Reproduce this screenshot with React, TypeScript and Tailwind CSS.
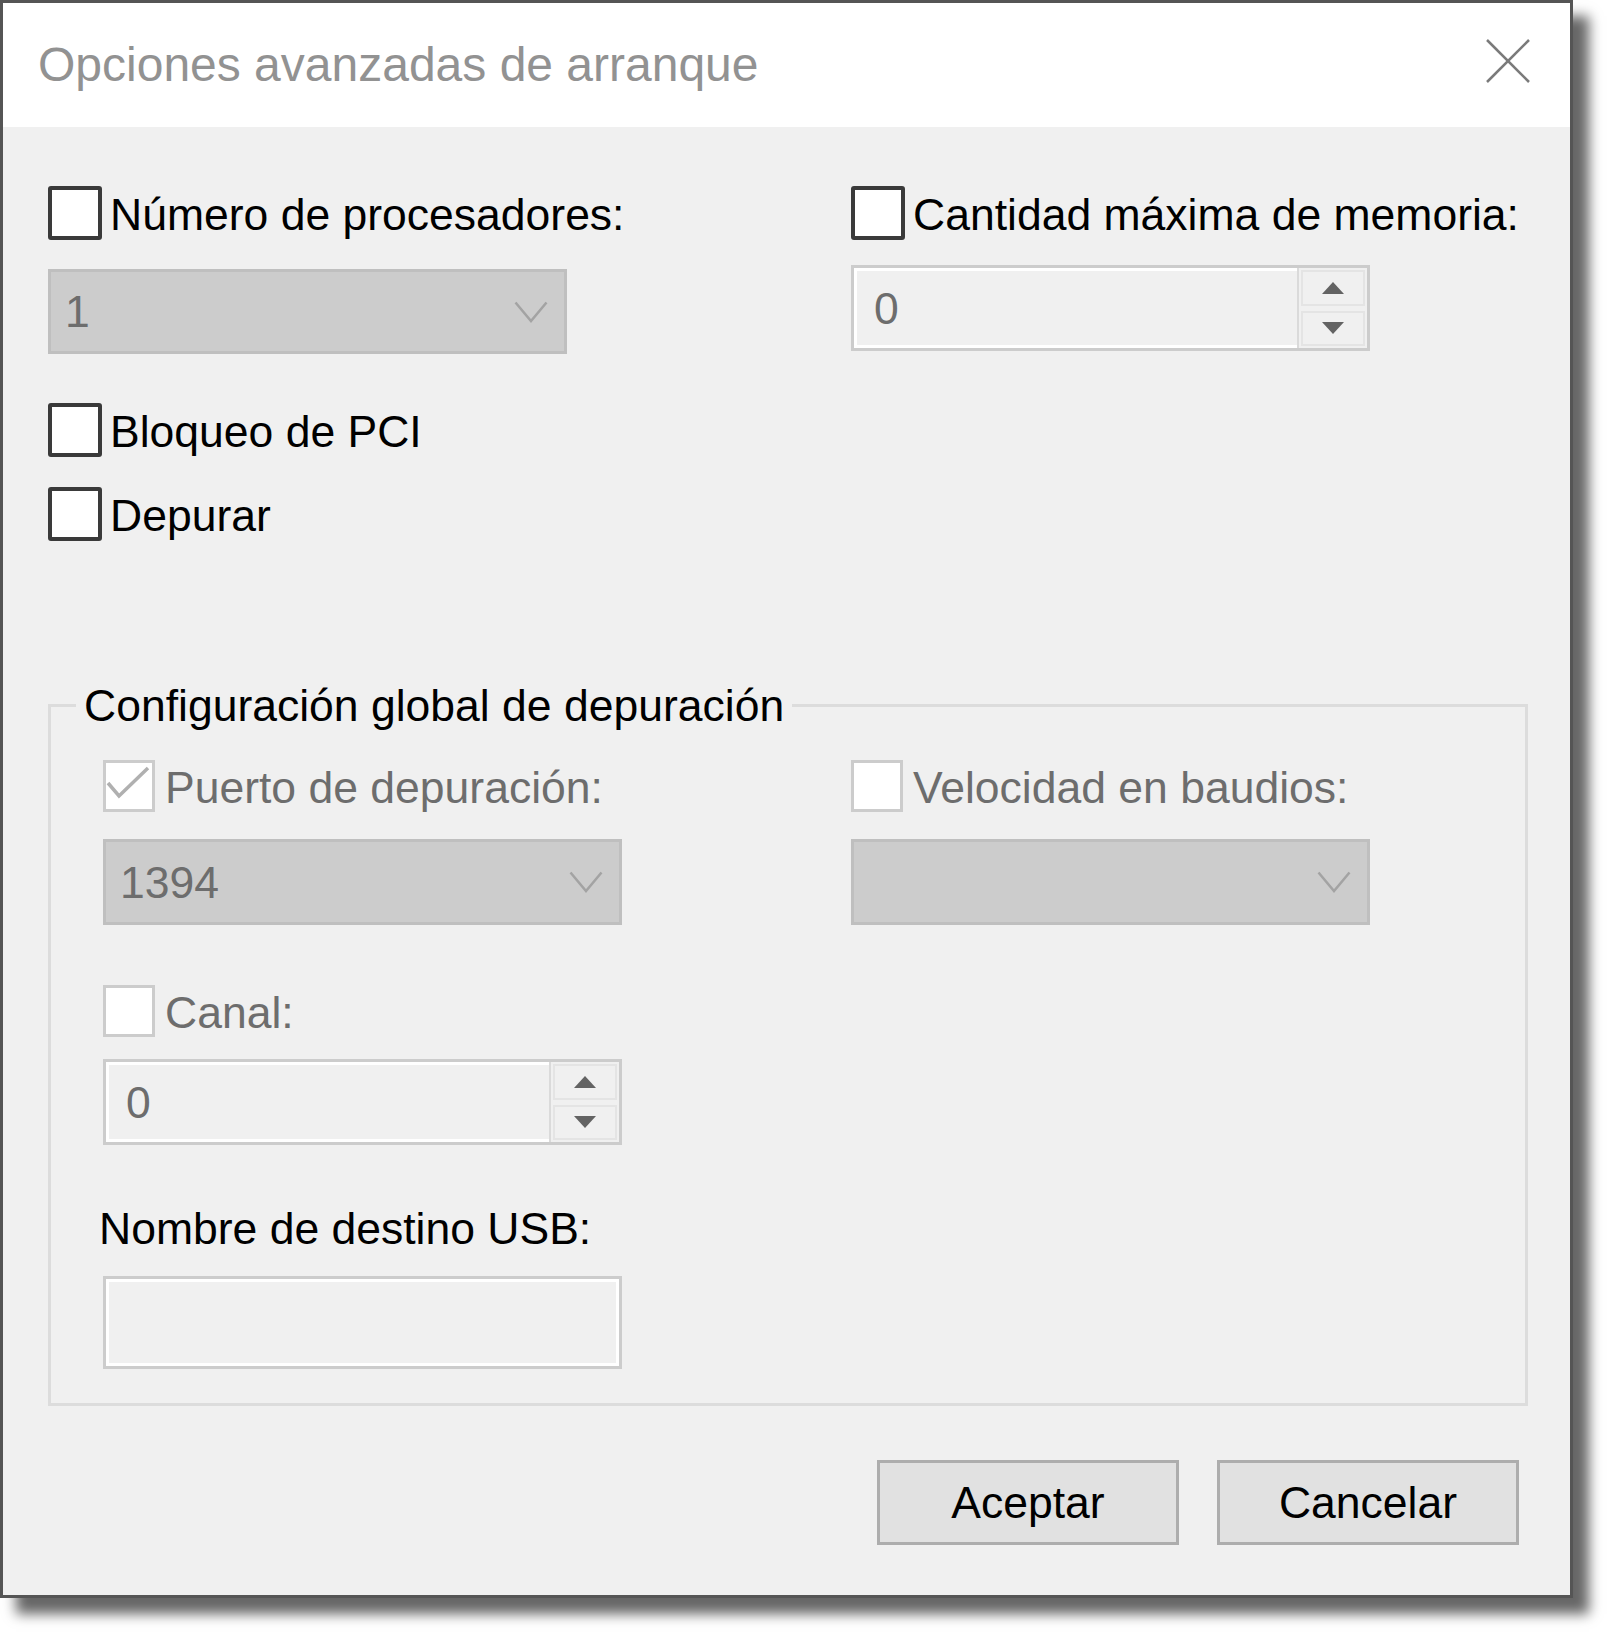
import React from "react";

function Box({ checked = false, disabled = false }: { checked?: boolean; disabled?: boolean }) {
  if (disabled) {
    return (
      <div className="flex h-[52px] w-[52px] shrink-0 items-center justify-center border-[3px] border-[#cccccc] bg-white">
        {checked && (
          <svg width="46" height="46" viewBox="0 0 46 46">
            <polyline points="2,20 13,33 42,5" fill="none" stroke="#b0b0b0" strokeWidth="3.5" />
          </svg>
        )}
      </div>
    );
  }
  return <div className="h-[54px] w-[54px] shrink-0 rounded-[3px] border-[4px] border-[#3a3a3a] bg-white" />;
}

function CheckRow({ label, disabled = false, checked = false }: { label: string; disabled?: boolean; checked?: boolean }) {
  return (
    <div className={disabled ? "flex h-[52px] items-center gap-[10px] text-[#6d6d6d]" : "flex h-[55px] items-center gap-[8px] text-black"}>
      <Box disabled={disabled} checked={checked} />
      <span className="whitespace-nowrap pt-[3px]">{label}</span>
    </div>
  );
}

function Chevron() {
  return (
    <svg width="34" height="22" viewBox="0 0 34 22">
      <polyline points="1.5,1.5 17,20 32.5,1.5" fill="none" stroke="#a3a3a3" strokeWidth="2.5" />
    </svg>
  );
}

function Combo({ value, tall = false }: { value?: string; tall?: boolean }) {
  return (
    <div
      className={
        (tall ? "h-[86px] " : "h-[85px] ") +
        "flex w-[519px] items-center justify-between border-[3px] border-[#bfbfbf] bg-[#cccccc] pl-[14px] pr-[16px] text-[#6d6d6d]"
      }
    >
      <span>{value ?? ""}</span>
      <Chevron />
    </div>
  );
}

function Spin() {
  return (
    <div className="flex h-[86px] w-[519px] border-[3px] border-[#cccccc] bg-[#f0f0f0]">
      <div className="flex flex-1 items-center border-[3px] border-r-0 border-white pl-[17px] text-[#6d6d6d]">0</div>
      <div className="flex w-[70px] flex-col gap-[5px] border-l-[2px] border-[#dadada] px-[2px] py-[2px]">
        <div className="flex flex-1 items-center justify-center border-[2px] border-[#e4e4e4] bg-[#f0f0f0]">
          <svg width="22" height="12" viewBox="0 0 22 12">
            <polygon points="11,0 22,12 0,12" fill="#636363" />
          </svg>
        </div>
        <div className="flex flex-1 items-center justify-center border-[2px] border-[#e4e4e4] bg-[#f0f0f0]">
          <svg width="22" height="12" viewBox="0 0 22 12">
            <polygon points="0,0 22,0 11,12" fill="#636363" />
          </svg>
        </div>
      </div>
    </div>
  );
}

function Button({ label }: { label: string }) {
  return (
    <div className="flex h-[85px] w-[302px] items-center justify-center border-[3px] border-[#adadad] bg-[#e1e1e1] text-black">
      {label}
    </div>
  );
}

export default function App() {
  return (
    <div className="h-[1644px] w-[1619px] bg-white font-['Liberation_Sans',Arial,sans-serif]">
      <div className="flex h-[1598px] w-[1573px] flex-col border-[3px] border-[#555555] bg-[#f0f0f0] shadow-[16px_16px_12px_rgba(0,0,0,0.6)]">
        {/* Title bar */}
        <div className="flex h-[124px] shrink-0 items-center justify-between bg-white pl-[35px] pr-[40px]">
          <span className="text-[48px] leading-[56px] text-[#929292]">Opciones avanzadas de arranque</span>
          <svg width="44" height="44" viewBox="0 0 44 44" className="-mt-[8px]">
            <line x1="1" y1="1" x2="43" y2="43" stroke="#7a7a7a" strokeWidth="2.5" />
            <line x1="43" y1="1" x2="1" y2="43" stroke="#7a7a7a" strokeWidth="2.5" />
          </svg>
        </div>

        {/* Body */}
        <div className="flex flex-1 flex-col pl-[45px] pt-[58px] text-[44.5px] leading-[51px] text-black">
          <div className="flex">
            <div className="flex w-[803px] flex-col">
              <CheckRow label="Número de procesadores:" />
              <div className="mt-[29px]">
                <Combo value="1" />
              </div>
            </div>
            <div className="flex flex-col">
              <CheckRow label="Cantidad máxima de memoria:" />
              <div className="mt-[25px]">
                <Spin />
              </div>
            </div>
          </div>

          <div className="mt-[48px]">
            <CheckRow label="Bloqueo de PCI" />
          </div>
          <div className="mt-[29px]">
            <CheckRow label="Depurar" />
          </div>

          <fieldset className="mt-[139px] h-[726px] w-[1480px] border-[3px] border-[#dcdcdc]">
            <legend className="ml-[25px] px-[8px] leading-[51px] text-black">Configuración global de depuración</legend>
            <div className="flex pl-[52px] pt-[29px]">
              <div className="flex w-[748px] flex-col">
                <CheckRow label="Puerto de depuración:" disabled checked />
                <div className="mt-[27px]">
                  <Combo value="1394" tall />
                </div>
                <div className="mt-[60px]">
                  <CheckRow label="Canal:" disabled />
                </div>
                <div className="mt-[22px]">
                  <Spin />
                </div>
                <div className="-ml-[4px] mt-[58px] whitespace-nowrap text-black">Nombre de destino USB:</div>
                <div className="mt-[22px] h-[93px] w-[519px] border-[3px] border-[#cccccc] bg-[#f0f0f0]">
                  <div className="h-full w-full border-[3px] border-white" />
                </div>
              </div>
              <div className="flex flex-col">
                <CheckRow label="Velocidad en baudios:" disabled />
                <div className="mt-[27px]">
                  <Combo tall />
                </div>
              </div>
            </div>
          </fieldset>

          <div className="mt-[54px] flex w-[1471px] justify-end gap-[38px]">
            <Button label="Aceptar" />
            <Button label="Cancelar" />
          </div>
        </div>
      </div>
    </div>
  );
}
